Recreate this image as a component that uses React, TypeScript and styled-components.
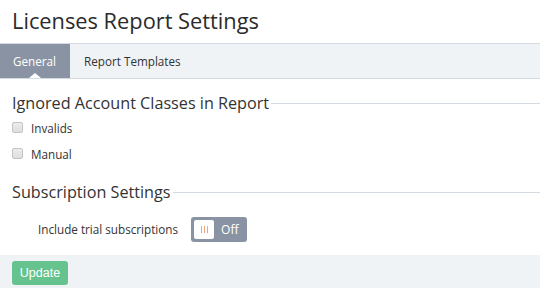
import React, {useState} from 'react';
import styled, {createGlobalStyle} from 'styled-components';

const GlobalStyle = createGlobalStyle`
    body {
        margin: 0;
        background: #fff;
        font-family: "Open Sans", "Liberation Sans", sans-serif;
        color: #333;
    }
`;

const App: React.FC = () => {
    const [checked, setChecked] = useState<{[k: string]: boolean}>({invalids: false, manual: false});
    const [trial, setTrial] = useState(false);

    const toggle = (key: string) => setChecked({...checked, [key]: !checked[key]});

    return (
        <>
            <GlobalStyle />
            <Page>
                <Title>Licenses Report Settings</Title>
                <TabBar>
                    <Tab active>General</Tab>
                    <Tab>Report Templates</Tab>
                </TabBar>
                <Body>
                    <Fieldset>
                        <Legend>Ignored Account Classes in Report</Legend>
                        <CheckRow>
                            <CheckBox type="checkbox" checked={checked.invalids} onChange={() => toggle('invalids')} />
                            <CheckLabel>Invalids</CheckLabel>
                        </CheckRow>
                        <CheckRow>
                            <CheckBox type="checkbox" checked={checked.manual} onChange={() => toggle('manual')} />
                            <CheckLabel>Manual</CheckLabel>
                        </CheckRow>
                    </Fieldset>
                    <Fieldset>
                        <Legend>Subscription Settings</Legend>
                        <SettingRow>
                            <SettingLabel>Include trial subscriptions</SettingLabel>
                            <Switch onClick={() => setTrial(!trial)}>
                                <Knob>
                                    <Grip /><Grip /><Grip />
                                </Knob>
                                <SwitchText>{trial ? 'On' : 'Off'}</SwitchText>
                            </Switch>
                        </SettingRow>
                    </Fieldset>
                </Body>
                <Footer>
                    <UpdateButton>Update</UpdateButton>
                </Footer>
            </Page>
        </>
    );
}

const Page = styled.div`
    width: 540px;
    height: 288px;
    display: flex;
    flex-direction: column;
    overflow: hidden;
`;

const Title = styled.h1`
    margin: 0;
    padding: 6px 12px 0;
    height: 38px;
    font-size: 21.8px;
    font-weight: 400;
    line-height: 30px;
    color: #2b2b2b;
`;

const TabBar = styled.div`
    display: flex;
    height: 35px;
    background: #f0f3f6;
    border-top: 1px solid #d5dbe2;
    border-bottom: 1px solid #d5dbe2;
`;

const Tab = styled.div<{active?: boolean}>`
    position: relative;
    display: flex;
    align-items: center;
    padding: 0 14px 0 ${props => props.active ? '13px' : '14px'};
    font-size: 11.7px;
    color: ${props => props.active ? '#fff' : '#333'};
    background: ${props => props.active ? '#8a93a3' : 'transparent'};

    &::after {
        content: '';
        display: ${props => props.active ? 'block' : 'none'};
        position: absolute;
        left: 50%;
        bottom: 0;
        margin-left: -6px;
        border: 6px solid transparent;
        border-bottom-width: 5px;
        border-top-width: 0;
        border-bottom-color: #fff;
    }
`;

const Body = styled.div`
    flex: 1;
    padding: 12px 0 0 12px;
`;

const Fieldset = styled.div`
    margin-bottom: 13px;
`;

const Legend = styled.div`
    display: flex;
    align-items: center;
    height: 24px;
    font-size: 16.2px;
    color: #333;
    white-space: nowrap;

    &::after {
        content: '';
        flex: 1;
        height: 1px;
        margin-left: 2px;
        margin-top: 2px;
        background: #d5dbe2;
    }
`;

const CheckRow = styled.label`
    display: flex;
    align-items: center;
    height: 26px;
    cursor: pointer;
`;

const CheckBox = styled.input`
    appearance: none;
    margin: 0 8px 0 0;
    width: 11px;
    height: 11px;
    border: 1px solid #c4c4c4;
    border-radius: 2px;
    background: linear-gradient(#ececec, #dedede);
    box-sizing: border-box;

    &:checked {
        background: #8a93a3;
    }
`;

const CheckLabel = styled.span`
    font-size: 11.7px;
    color: #333;
`;

const SettingRow = styled.div`
    display: flex;
    align-items: center;
    gap: 13px;
    padding: 13px 0 0 26px;
`;

const SettingLabel = styled.span`
    font-size: 11.7px;
    color: #333;
`;

const Switch = styled.div`
    display: flex;
    align-items: center;
    width: 56px;
    height: 25px;
    padding: 0 3px;
    box-sizing: border-box;
    border-radius: 3px;
    background: #8a93a3;
    cursor: pointer;
`;

const Knob = styled.div`
    display: flex;
    align-items: center;
    justify-content: center;
    gap: 2px;
    width: 20px;
    height: 19px;
    border-radius: 2px;
    background: #fff;
`;

const Grip = styled.span`
    width: 1px;
    height: 7px;
    background: #f0a676;
`;

const SwitchText = styled.span`
    margin-left: 7px;
    font-size: 12px;
    color: #fff;
`;

const Footer = styled.div`
    height: 34px;
    background: #f0f3f6;
    padding: 5px 12px 0;
    box-sizing: border-box;
`;

const UpdateButton = styled.button`
    height: 24px;
    width: 56px;
    border: none;
    border-radius: 3px;
    background: #66c38e;
    color: #fff;
    font-family: "Liberation Sans", Arial, sans-serif;
    font-size: 12.5px;
    padding: 0;
    cursor: pointer;
`;

export default App;
